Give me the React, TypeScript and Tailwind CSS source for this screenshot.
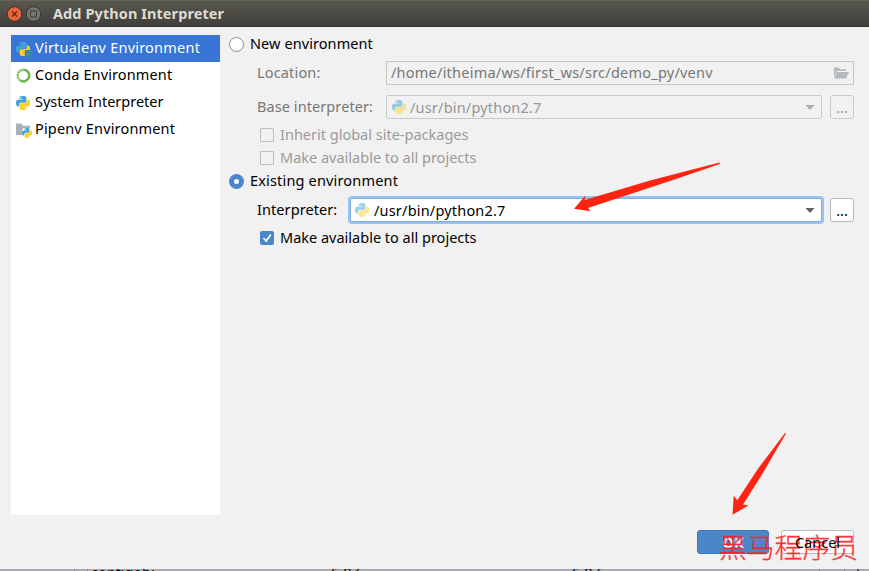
import type { ReactNode } from 'react';

function PythonIcon({ className = '' }: { className?: string }) {
  return (
    <svg viewBox="0 0 24 24" className={`h-[14px] w-[14px] shrink-0 ${className}`}>
      <path fill="#43a3d5" fillRule="evenodd" d="M14.25.18l.9.2.73.26.59.3.45.32.34.34.25.34.16.33.1.3.04.26.02.2-.01.13V8.5l-.05.63-.13.55-.21.46-.26.38-.3.31-.33.25-.35.19-.35.14-.33.1-.3.07-.26.04-.21.02H8.77l-.69.05-.59.14-.5.22-.41.27-.33.32-.27.35-.2.36-.15.37-.1.35-.07.32-.04.27-.02.21v3.06H3.17l-.21-.03-.28-.07-.32-.12-.35-.18-.36-.26-.36-.36-.35-.46-.32-.59-.28-.73-.21-.88-.14-1.05-.05-1.23.06-1.22.16-1.04.24-.87.32-.71.36-.57.4-.44.42-.33.42-.24.4-.16.36-.1.32-.05.24-.01h.16l.06.01h8.16v-.83H6.18l-.01-2.75-.02-.37.05-.34.11-.31.17-.28.25-.26.31-.23.38-.2.44-.18.51-.15.58-.12.64-.1.71-.06.77-.04.84-.02 1.27.05zm-6.3 1.98l-.23.33-.08.41.08.41.23.34.33.22.41.09.41-.09.33-.22.23-.34.08-.41-.08-.41-.23-.33-.33-.22-.41-.09-.41.09z" />
      <path fill="#ffce1f" fillRule="evenodd" d="M21.1 6.11l.28.06.32.12.35.18.36.27.36.35.35.47.32.59.28.73.21.88.14 1.04.05 1.23-.06 1.23-.16 1.04-.24.86-.32.71-.36.57-.4.45-.42.33-.42.24-.4.16-.36.09-.32.05-.24.02-.16-.01h-8.22v.82h5.84l.01 2.76.02.36-.05.34-.11.31-.17.29-.25.25-.31.24-.38.2-.44.17-.51.15-.58.13-.64.09-.71.07-.77.04-.84.01-1.27-.04-1.07-.14-.9-.2-.73-.25-.59-.3-.45-.33-.34-.34-.25-.34-.16-.33-.1-.3-.04-.25-.02-.2.01-.13v-5.34l.05-.64.13-.54.21-.46.26-.38.3-.32.33-.24.35-.2.35-.14.33-.1.3-.06.26-.04.21-.02.13-.01h5.84l.69-.05.59-.14.5-.21.41-.28.33-.32.27-.35.2-.36.15-.36.1-.35.07-.32.04-.28.02-.21V6.07h2.09zm-6.47 14.25l-.23.33-.08.41.08.41.23.33.33.23.41.08.41-.08.33-.23.23-.33.08-.41-.08-.41-.23-.33-.33-.23-.41-.08-.41.08z" />
    </svg>
  );
}

function VirtualenvIcon() {
  return (
    <span className="relative h-[14px] w-[15px] shrink-0">
      <PythonIcon className="block" />
      <svg viewBox="0 0 7 7" className="absolute -right-px bottom-[-1px] h-[7px] w-[7px]">
        <path d="M0 0h7v7H0z" fill="#3875d6" />
        <path d="M1 .5 3.5 6 6 .5" fill="none" stroke="#4aa554" strokeWidth="1.4" />
      </svg>
    </span>
  );
}

function CondaIcon() {
  return (
    <svg viewBox="0 0 15 15" className="h-[15px] w-[15px] shrink-0">
      <path d="M7.5 1.7a5.8 5.8 0 1 1-3 10.8" fill="none" stroke="#62b543" strokeWidth="2.3" />
      <path d="M4.5 12.5a5.8 5.8 0 0 1 3-10.8" fill="none" stroke="#74be59" strokeWidth="2.2" strokeDasharray="2.2 .5" />
    </svg>
  );
}

function PipenvIcon() {
  return (
    <span className="relative h-[14px] w-[15px] shrink-0">
      <svg viewBox="0 0 14 12" className="block h-[12px] w-[14px]">
        <path d="M0 .5h5.2L7 2.7h7V12H0z" fill="#a8b2ba" />
      </svg>
      <span className="absolute -right-px bottom-[-1px] h-[10px] w-[10px] rounded-[3px] bg-white">
        <PythonIcon className="block h-[10px]! w-[10px]!" />
      </span>
    </span>
  );
}

function Item({ icon, children, active = false, tracking }: { icon: ReactNode; children: ReactNode; active?: boolean; tracking: string }) {
  return (
    <div className={`flex h-[27px] items-center pl-[5px] ${active ? 'bg-[#3875d6] text-white' : 'text-black'}`}>
      <span className="flex w-[19px] shrink-0 items-center">{icon}</span>
      <span className={`pb-[3px] ${tracking}`}>{children}</span>
    </div>
  );
}

function Caret({ className }: { className: string }) {
  return (
    <svg viewBox="0 0 10 5" className={`ml-auto h-[5px] w-[10px] ${className}`}>
      <path d="M.5 0h9L5 5z" fill="currentColor" />
    </svg>
  );
}

export default function App() {
  return (
    <div className="relative flex h-[571px] w-[869px] flex-col overflow-hidden bg-[#f1f1f1] font-['Noto_Sans','Noto_Sans_CJK_SC',sans-serif] text-[14.5px] leading-[20px] whitespace-nowrap text-black">
      <header className="flex h-[27px] shrink-0 items-center border-t border-b border-t-[#65645c] border-b-[#393833] bg-linear-to-b from-[#58574f] to-[#403f3a] pl-[6px]">
        <svg viewBox="0 0 36 18" className="h-[18px] w-[36px] shrink-0">
          <circle cx="8.5" cy="9" r="7.3" fill="#ec6339" stroke="#36322c" />
          <path d="m6 6.5 5 5m0-5-5 5" stroke="#57291c" strokeWidth="1.3" />
          <circle cx="27.5" cy="9" r="7.3" fill="#77766f" stroke="#36342e" />
          <path d="M24.5 6h6v6h-6z" fill="none" stroke="#3c3b37" />
        </svg>
        <h1 className="ml-[11px] pb-[2px] text-[14.5px] font-bold tracking-[0.08px] text-[#dfdbd2]">Add Python Interpreter</h1>
      </header>

      <div className="flex h-[488px] shrink-0">
        <nav className="mt-[8px] ml-[11px] w-[209px] shrink-0 bg-white">
          <Item active tracking="tracking-[0.22px]" icon={<VirtualenvIcon />}>Virtualenv Environment</Item>
          <Item tracking="tracking-[0.12px]" icon={<CondaIcon />}>Conda Environment</Item>
          <Item tracking="tracking-[0px]" icon={<PythonIcon />}>System Interpreter</Item>
          <Item tracking="tracking-[0.16px]" icon={<PipenvIcon />}>Pipenv Environment</Item>
        </nav>

        <main className="ml-[9px] flex w-[625px] flex-col pt-[7px]">
          <div className="flex h-[20px] items-center">
            <span className="h-[15px] w-[15px] rounded-full border border-[#8c8c8c] bg-white" />
            <span className="ml-[6px] pb-[2px] tracking-[0.08px]">New environment</span>
          </div>
          <div className="mt-[7px] flex h-[24px] items-center pl-[28px]">
            <span className="w-[129px] pb-[2px] tracking-[0.16px] text-[#777]">Location:</span>
            <div className="flex h-[24px] w-[468px] items-center border border-[#c6c6c6] pr-[4px] pl-[4px] text-[#777]">
              <span className="pb-[2px] tracking-[0.23px]">/home/itheima/ws/first_ws/src/demo_py/venv</span>
              <svg viewBox="0 0 16 12" className="ml-auto h-[12px] w-[16px]">
                <path d="M1 10V.5h4.5L7 2.3h6V4H4z" fill="#b4b9bd" />
                <path d="M4 5h12l-2.8 6.5H1z" fill="#b4b9bd" />
              </svg>
            </div>
          </div>
          <div className="mt-[10px] flex h-[24px] items-center pl-[28px]">
            <span className="w-[129px] pb-[2px] tracking-[0.08px] text-[#777]">Base interpreter:</span>
            <div className="flex h-[24px] w-[436px] items-center rounded-[2px] border border-[#c9c9c9] pr-[6px] pl-[5px] text-[#969696]">
              <PythonIcon className="opacity-50" />
              <span className="ml-[4px] tracking-[0.19px]">/usr/bin/python2.7</span>
              <Caret className="text-[#adadad]" />
            </div>
            <div className="ml-[8px] h-[24px] w-[24px] rounded-[3px] border border-[#c9c9c9] text-center leading-[23px] text-[#969696]">...</div>
          </div>
          <div className="mt-[6px] flex h-[20px] items-center pl-[31px] text-[#9b9b9b]">
            <span className="h-[14px] w-[14px] rounded-[1px] border border-[#bdbdbd]" />
            <span className="ml-[6px] pb-[2px]">Inherit global site-packages</span>
          </div>
          <div className="mt-[3px] flex h-[20px] items-center pl-[31px] text-[#9b9b9b]">
            <span className="h-[14px] w-[14px] rounded-[1px] border border-[#bdbdbd]" />
            <span className="ml-[6px] pb-[2px]">Make available to all projects</span>
          </div>
          <div className="mt-[3px] flex h-[20px] items-center">
            <span className="flex h-[15px] w-[15px] items-center justify-center rounded-full bg-[#4a87c9]">
              <span className="h-[5px] w-[5px] rounded-full bg-white" />
            </span>
            <span className="ml-[6px] pb-[2px] tracking-[0.17px]">Existing environment</span>
          </div>
          <div className="mt-[5px] flex h-[28px] items-center pl-[28px]">
            <span className="w-[91px] pb-[2px] tracking-[0.08px]">Interpreter:</span>
            <div className="flex h-[28px] w-[476px] items-center rounded-[4px] border-2 border-[#97c3f3] bg-white">
              <div className="flex h-full w-full items-center rounded-[2px] border border-[#7eaddf] pr-[6px] pl-[4px]">
                <PythonIcon className="opacity-50" />
                <span className="ml-[5px] tracking-[0.19px]">/usr/bin/python2.7</span>
                <Caret className="text-[#616161]" />
              </div>
            </div>
            <div className="ml-[6px] h-[24px] w-[24px] rounded-[3px] border border-[#b8b8b8] bg-white text-center leading-[23px]">...</div>
          </div>
          <div className="mt-[4px] flex h-[20px] items-center pl-[31px]">
            <span className="h-[14px] w-[14px] rounded-[2px] bg-[#4a87c9]">
              <svg viewBox="0 0 14 14" className="h-[14px] w-[14px]">
                <path d="m3.5 7 2.7 3L10.8 3.5" fill="none" stroke="#fff" strokeWidth="1.8" />
              </svg>
            </span>
            <span className="ml-[6px] pb-[2px]">Make available to all projects</span>
          </div>
        </main>
      </div>

      <footer className="flex h-[54px] shrink-0 items-start justify-end gap-[12px] pt-[15px] pr-[15px]">
        <button className="h-[24px] w-[72px] rounded-[3px] border border-[#3d78b8] bg-[#4a87c9] text-[14.5px] leading-[21px] font-bold text-white">OK</button>
        <button className="h-[24px] w-[73px] rounded-[3px] border border-[#bcbcbc] bg-white text-[14.5px] leading-[20px]">
          <span className="relative z-10">Cancel</span>
        </button>
      </footer>

      <div className="flex h-[2px] shrink-0 overflow-hidden bg-linear-to-b from-[#a2a2a4] to-[#b8b6bb] text-[14.5px] leading-[6px]">
        <span className="ml-[74px] h-[2px] w-[14px] border-x border-[#88868b]" />
        <span className="ml-[3px] w-[240px]">configobj</span>
        <span className="w-[241px]">5.0.6</span>
        <span className="w-[247px]">5.0.6</span>
        <span className="h-[2px] w-[26px] border-x border-[#88868b]" />
        <span className="ml-[12px] h-[2px] w-[2px] bg-[#55535a]" />
      </div>

      <svg viewBox="0 0 869 571" className="pointer-events-none absolute inset-0 h-full w-full">
        <path d="M574 208.7 585.5 195.5 584.7 200 650 180.5 719.5 162.5 719.8 164 670 181 588 208 590.7 211.3z" fill="#ff2412" />
        <path d="M732.5 514.7 733.7 495.7 737.3 500.3 758.5 468 785.2 432.8 786 433.6 760.5 477 743 504.6 748.5 505.4z" fill="#ff2412" />
      </svg>
      <div className="pointer-events-none absolute top-[526px] left-[719px] font-['Noto_Sans_CJK_SC',sans-serif] text-[27.8px] leading-[40px] font-light text-[#fb1f1f] opacity-90 [-webkit-text-stroke:0.3px_#fb1f1f]">黑马程序员</div>
    </div>
  );
}
